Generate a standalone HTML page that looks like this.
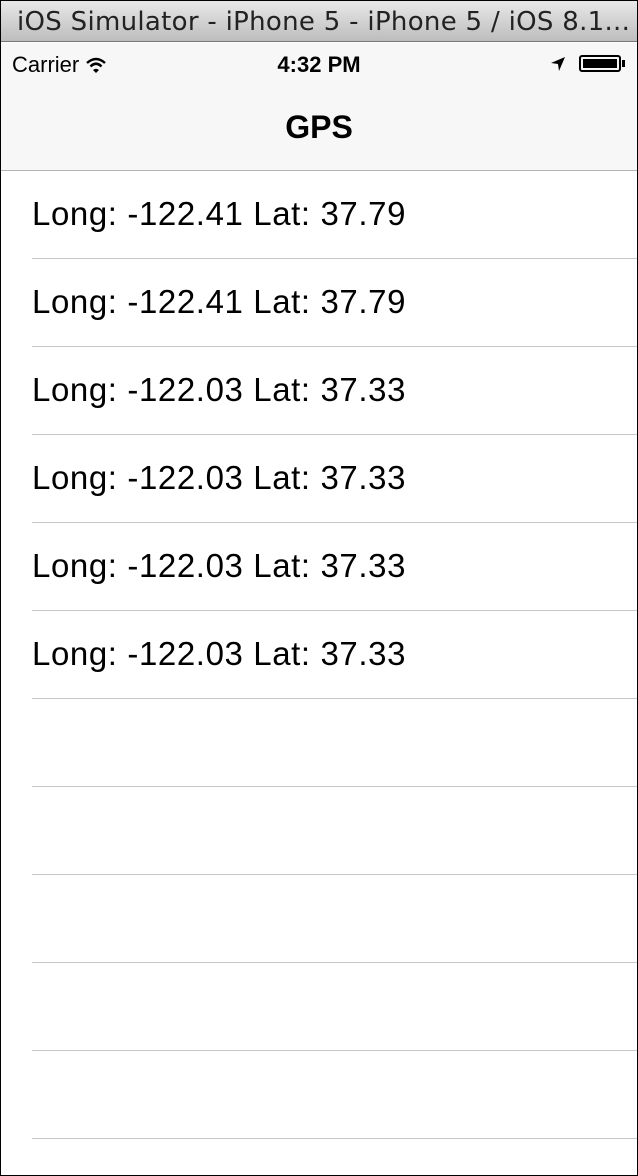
<!DOCTYPE html>
<html><head><style>
body{margin:0;width:638px;height:1176px;overflow:hidden;font-family:"Liberation Sans",sans-serif;background:#fff;}
.frame{position:absolute;left:0;top:0;width:636px;height:1174px;border:1px solid #000;}
.title{position:absolute;left:0;top:0;width:636px;height:41px;background:linear-gradient(#e8e8e8,#bdbdbd);border-bottom:1px solid #777;font-family:"DejaVu Sans",sans-serif;font-size:26px;letter-spacing:0.3px;color:#222;line-height:42px;padding-left:16px;box-sizing:border-box;white-space:nowrap;overflow:hidden;}
.nav{position:absolute;left:0;top:42px;width:636px;height:127px;background:#f7f7f7;border-bottom:1px solid #b5b5b5;}
.carrier{position:absolute;left:11px;top:9px;font-size:22px;}
.time{position:absolute;left:0;width:636px;text-align:center;top:9px;font-size:22px;font-weight:bold;}
.gps{position:absolute;left:0;width:636px;text-align:center;top:66px;font-size:32px;font-weight:bold;}
.row{position:absolute;left:31px;width:605px;height:87px;border-bottom:1px solid #c8c7cc;font-size:33px;letter-spacing:0.6px;line-height:86px;}
</style></head><body>
<div class="frame">
<div class="title">iOS Simulator - iPhone 5 - iPhone 5 / iOS 8.1...</div>
<div class="nav">
<div class="carrier">Carrier <svg width="22" height="16" viewBox="0 0 22 16" style="vertical-align:-1px"><path d="M2 6 Q11 -2 20 6" stroke="#000" stroke-width="2.5" fill="none"/><path d="M5.5 9.5 Q11 4 16.5 9.5" stroke="#000" stroke-width="2.5" fill="none"/><path d="M8 13 L11 16 L14 13 Q11 10.5 8 13Z" fill="#000"/></svg></div>
<div class="time">4:32 PM</div>
<svg style="position:absolute;left:549px;top:13px" width="16" height="16" viewBox="0 0 16 16"><path d="M15 1 L1 7 L8 8 L9 15Z" fill="#000"/></svg>
<div style="position:absolute;left:578px;top:12px;width:42px;height:17px;border:2px solid #000;border-radius:3px;box-sizing:border-box;padding:2px"><div style="background:#000;width:100%;height:100%"></div></div>
<div style="position:absolute;left:621px;top:17px;width:3px;height:7px;background:#000"></div>
<div class="gps">GPS</div>
</div>
<div class="row" style="top:170px">Long: -122.41 Lat: 37.79</div>
<div class="row" style="top:258px">Long: -122.41 Lat: 37.79</div>
<div class="row" style="top:346px">Long: -122.03 Lat: 37.33</div>
<div class="row" style="top:434px">Long: -122.03 Lat: 37.33</div>
<div class="row" style="top:522px">Long: -122.03 Lat: 37.33</div>
<div class="row" style="top:610px">Long: -122.03 Lat: 37.33</div>
<div class="row" style="top:698px"></div>
<div class="row" style="top:786px"></div>
<div class="row" style="top:874px"></div>
<div class="row" style="top:962px"></div>
<div class="row" style="top:1050px"></div>
</div>
</body></html>
